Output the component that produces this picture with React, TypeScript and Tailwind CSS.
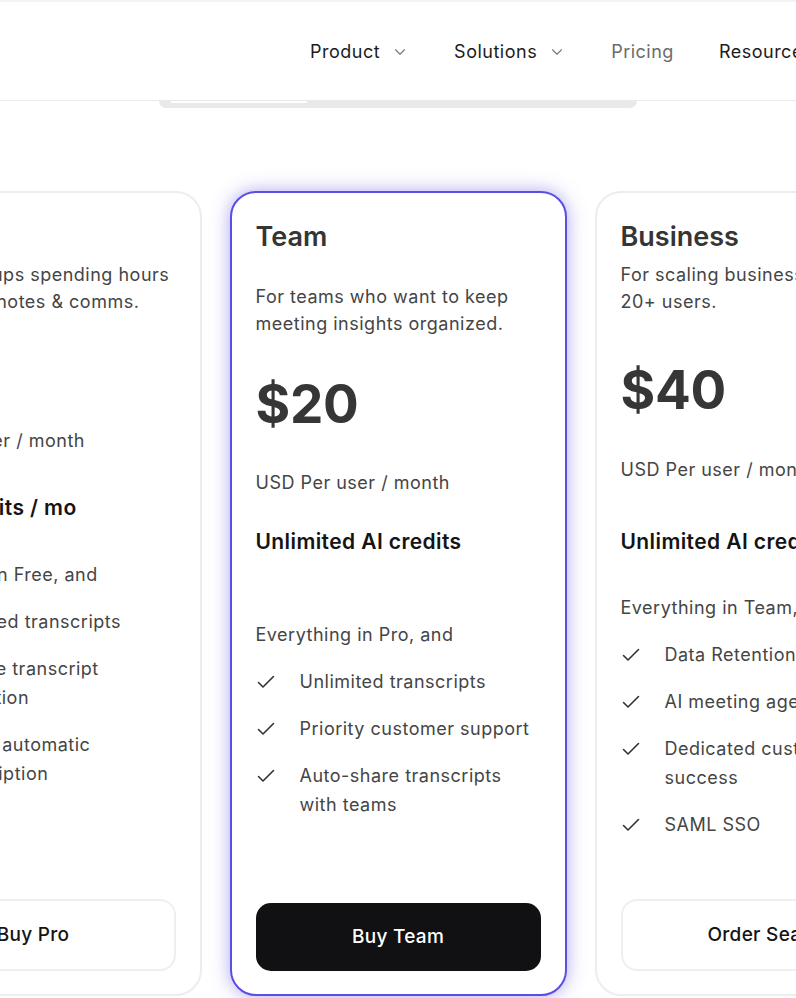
import { ChevronDown } from "lucide-react";

type Plan = {
  name: string;
  blurb: string;
  price: string;
  credits: string;
  intro: string;
  items: string[];
  cta: string;
  featured?: boolean;
  // vertical rhythm differs a bit per card
  gaps: { desc: string; price: string; usd: string; credits: string; intro: string };
};

const PLANS: Plan[] = [
  {
    name: "Pro",
    blurb: "For all startups spending hours on meeting notes & comms.",
    price: "$10",
    credits: "50 AI credits / mo",
    intro: "Everything in Free, and",
    items: ["Unlimited transcripts", "Editable transcript translation", "Robust automatic transcription"],
    cta: "Buy Pro",
    gaps: { desc: "mt-[8px]", price: "mt-[14px]", usd: "mt-[34px]", credits: "mt-[40px]", intro: "mt-[39px]" },
  },
  {
    name: "Team",
    blurb: "For teams who want to keep meeting insights organized.",
    price: "$20",
    credits: "Unlimited AI credits",
    intro: "Everything in Pro, and",
    items: ["Unlimited transcripts", "Priority customer support", "Auto-share transcripts with teams"],
    cta: "Buy Team",
    featured: true,
    gaps: { desc: "mt-[30px]", price: "mt-[35px]", usd: "mt-[33px]", credits: "mt-[32px]", intro: "mt-[65px]" },
  },
  {
    name: "Business",
    blurb: "For scaling businesses with 20+ users.",
    price: "$40",
    credits: "Unlimited AI credits",
    intro: "Everything in Team, and",
    items: ["Data Retention", "AI meeting agents", "Dedicated customer success", "SAML SSO"],
    cta: "Order Seats",
    gaps: { desc: "mt-[8px]", price: "mt-[43px]", usd: "mt-[34px]", credits: "mt-[45px]", intro: "mt-[38px]" },
  },
];

function Check() {
  return (
    <svg width="18" height="14" viewBox="0 0 18 14" fill="none" stroke="#333" strokeWidth="1.6" strokeLinecap="round" strokeLinejoin="round">
      <path d="M1.5 7.5l4.5 4.5L16.5 1.5" />
    </svg>
  );
}

function NavItem({ label, menu, muted }: { label: string; menu?: boolean; muted?: boolean }) {
  return (
    <div className={`flex items-center gap-[11px] ${muted ? "text-[#6b6b6b]" : "text-[#1c1c1c]"}`}>
      <span className="text-[18px] leading-[24px] tracking-[0.5px] whitespace-nowrap">{label}</span>
      {menu && <ChevronDown size={18} strokeWidth={1.5} className="text-[#7a7a7a]" />}
    </div>
  );
}

function PlanCard({ plan }: { plan: Plan }) {
  const g = plan.gaps;
  return (
    <div
      className={`w-[337px] h-[805px] shrink-0 rounded-[26px] bg-white border-2 flex flex-col pt-[28px] pb-[23px] px-[24px] ${
        plan.featured
          ? "border-[#5b4ee2] shadow-[0_0_18px_rgba(94,81,228,0.5)]"
          : "border-[#ededed]"
      }`}
    >
      <h3 className="text-[27px] leading-[32px] font-semibold text-[#353535]">{plan.name}</h3>
      <p className={`${g.desc} text-[18px] leading-[27px] tracking-[0.5px] text-[#454545]`}>{plan.blurb}</p>
      <div className={`${g.price} text-[53px] leading-[64px] font-bold text-[#363636] tracking-[-0.3px]`}>{plan.price}</div>
      <div className={`${g.usd} text-[18px] leading-[27px] tracking-[0.5px] text-[#454545]`}>USD Per user / month</div>
      <div className={`${g.credits} text-[21px] leading-[28px] tracking-[0.4px] font-semibold text-[#141414]`}>{plan.credits}</div>
      <div className={`${g.intro} text-[18px] leading-[27px] tracking-[0.5px] text-[#454545]`}>{plan.intro}</div>
      <ul className="mt-[19px] flex flex-col gap-[18px]">
        {plan.items.map((it) => (
          <li key={it} className="flex">
            <span className="w-[44px] shrink-0 h-[29px] flex items-center pl-[1px]">
              <Check />
            </span>
            <span className="text-[18px] leading-[29px] tracking-[0.5px] text-[#454545]">{it}</span>
          </li>
        ))}
      </ul>
      {plan.featured ? (
        <button className="mt-auto h-[68px] w-full rounded-[15px] bg-[#111113] text-white text-[19px] tracking-[0.3px] font-medium">
          {plan.cta}
        </button>
      ) : (
        <button className="mt-auto h-[72px] w-full rounded-[16px] border-2 border-[#efefef] bg-white text-[#141414] text-[19px] tracking-[0.3px] font-medium">
          {plan.cta}
        </button>
      )}
    </div>
  );
}

export default function App() {
  return (
    <div className="w-full min-h-[998px] bg-white overflow-hidden font-['Inter','Noto_Sans',sans-serif]">
      <header className="border-t-2 border-[#f3f3f3] border-b border-b-[#ebebeb] h-[101px] flex items-center pl-[310px] gap-[45px] pt-[1px]">
        <NavItem label="Product" menu />
        <NavItem label="Solutions" menu />
        <NavItem label="Pricing" muted />
        <NavItem label="Resources" menu />
      </header>

      {/* billing toggle peeking out from under the header */}
      <div className="mx-auto w-[478px] h-[7px] rounded-b-[10px] bg-[#e9e9ea] px-[12px]">
        <div className="w-[136px] h-[2px] bg-white" />
      </div>

      <div className="mt-[83px] flex justify-center gap-[28px]">
        {PLANS.map((p) => (
          <PlanCard key={p.name} plan={p} />
        ))}
      </div>
    </div>
  );
}
